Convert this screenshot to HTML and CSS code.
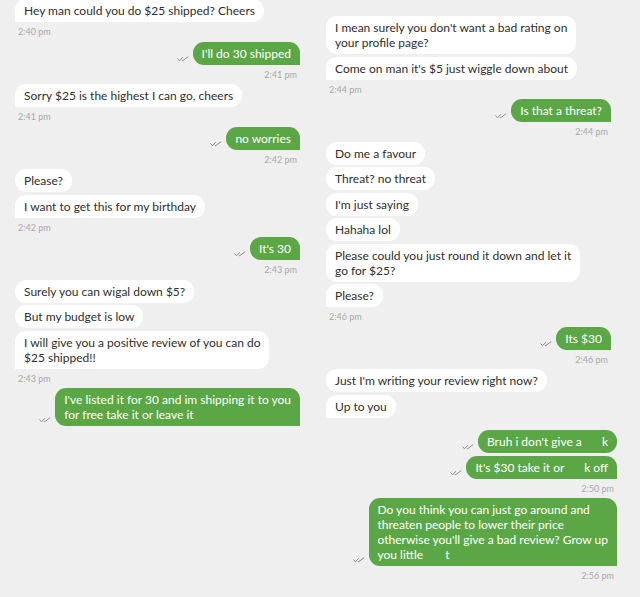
FILE: index.html
```html
<!DOCTYPE html>
<html lang="en">
<head>
<meta charset="utf-8">
<title>Chat</title>
<link rel="stylesheet" href="styles.css">
</head>
<body>
<main class="page">
  <section class="col col-left">
    <div class="group">
      <div class="row in"><p class="bubble tail">Hey man could you do $25 shipped? Cheers</p></div>
    </div>
    <div class="time">2:40 pm</div>

    <div class="group">
      <div class="row out"><svg class="tick" viewBox="0 0 12 6" width="12" height="6"><path d="M0.5 2.5 L2.5 4.8 L5.8 1.2 M4.8 4 L5.6 4.8 L11.2 0.6"/></svg><p class="bubble tail">I'll do 30 shipped</p></div>
    </div>
    <div class="time right">2:41 pm</div>

    <div class="group">
      <div class="row in"><p class="bubble tail">Sorry $25 is the highest I can go, cheers</p></div>
    </div>
    <div class="time">2:41 pm</div>

    <div class="group">
      <div class="row out"><svg class="tick" viewBox="0 0 12 6" width="12" height="6"><path d="M0.5 2.5 L2.5 4.8 L5.8 1.2 M4.8 4 L5.6 4.8 L11.2 0.6"/></svg><p class="bubble tail">no worries</p></div>
    </div>
    <div class="time right">2:42 pm</div>

    <div class="group">
      <div class="row in"><p class="bubble">Please?</p></div>
      <div class="row in"><p class="bubble tail">I want to get this for my birthday</p></div>
    </div>
    <div class="time">2:42 pm</div>

    <div class="group">
      <div class="row out"><svg class="tick" viewBox="0 0 12 6" width="12" height="6"><path d="M0.5 2.5 L2.5 4.8 L5.8 1.2 M4.8 4 L5.6 4.8 L11.2 0.6"/></svg><p class="bubble tail">It's 30</p></div>
    </div>
    <div class="time right">2:43 pm</div>

    <div class="group">
      <div class="row in"><p class="bubble">Surely you can wigal down $5?</p></div>
      <div class="row in"><p class="bubble">But my budget is low</p></div>
      <div class="row in"><p class="bubble tail">I will give you a positive review of you can do<br>$25 shipped!!</p></div>
    </div>
    <div class="time">2:43 pm</div>

    <div class="group">
      <div class="row out"><svg class="tick" viewBox="0 0 12 6" width="12" height="6"><path d="M0.5 2.5 L2.5 4.8 L5.8 1.2 M4.8 4 L5.6 4.8 L11.2 0.6"/></svg><p class="bubble tail">I've listed it for 30 and im shipping it to you<br>for free take it or leave it</p></div>
    </div>
  </section>

  <section class="col col-right">
    <div class="group">
      <div class="row in"><p class="bubble">I mean surely you don't want a bad rating on<br>your profile page?</p></div>
      <div class="row in"><p class="bubble tail">Come on man it's $5 just wiggle down about</p></div>
    </div>
    <div class="time">2:44 pm</div>

    <div class="group">
      <div class="row out"><svg class="tick" viewBox="0 0 12 6" width="12" height="6"><path d="M0.5 2.5 L2.5 4.8 L5.8 1.2 M4.8 4 L5.6 4.8 L11.2 0.6"/></svg><p class="bubble tail">Is that a threat?</p></div>
    </div>
    <div class="time right">2:44 pm</div>

    <div class="group">
      <div class="row in"><p class="bubble">Do me a favour</p></div>
      <div class="row in"><p class="bubble">Threat? no threat</p></div>
      <div class="row in"><p class="bubble">I'm just saying</p></div>
      <div class="row in"><p class="bubble">Hahaha lol</p></div>
      <div class="row in"><p class="bubble">Please could you just round it down and let it<br>go for $25?</p></div>
      <div class="row in"><p class="bubble tail">Please?</p></div>
    </div>
    <div class="time">2:46 pm</div>

    <div class="group">
      <div class="row out"><svg class="tick" viewBox="0 0 12 6" width="12" height="6"><path d="M0.5 2.5 L2.5 4.8 L5.8 1.2 M4.8 4 L5.6 4.8 L11.2 0.6"/></svg><p class="bubble tail">Its $30</p></div>
    </div>
    <div class="time right">2:46 pm</div>

    <div class="group">
      <div class="row in"><p class="bubble">Just I'm writing your review right now?</p></div>
      <div class="row in"><p class="bubble tail">Up to you</p></div>
    </div>

    <div class="later">
      <div class="group">
        <div class="row out"><svg class="tick" viewBox="0 0 12 6" width="12" height="6"><path d="M0.5 2.5 L2.5 4.8 L5.8 1.2 M4.8 4 L5.6 4.8 L11.2 0.6"/></svg><p class="bubble">Bruh i don't give a <span class="blank"></span>k</p></div>
        <div class="row out"><svg class="tick" viewBox="0 0 12 6" width="12" height="6"><path d="M0.5 2.5 L2.5 4.8 L5.8 1.2 M4.8 4 L5.6 4.8 L11.2 0.6"/></svg><p class="bubble tail">It's $30 take it or <span class="blank"></span>k off</p></div>
      </div>
      <div class="time right">2:50 pm</div>

      <div class="group">
        <div class="row out"><svg class="tick" viewBox="0 0 12 6" width="12" height="6"><path d="M0.5 2.5 L2.5 4.8 L5.8 1.2 M4.8 4 L5.6 4.8 L11.2 0.6"/></svg><p class="bubble tail">Do you think you can just go around and<br>threaten people to lower their price<br>otherwise you'll give a bad review? Grow up<br>you little <span class="blank wide"></span>t</p></div>
      </div>
      <div class="time right">2:56 pm</div>
    </div>
  </section>
</main>
</body>
</html>
```

FILE: styles.css
```css
html, body {
  margin: 0;
  padding: 0;
}

body {
  background: #efefef;
  font-family: Lato, "Open Sans", "Liberation Sans", sans-serif;
  color: #333;
}

.page {
  display: flex;
  height: 597px;
  overflow: hidden;
}

.col {
  width: 285px;
  display: flex;
  flex-direction: column;
}

.col-left {
  margin-left: 15px;
  margin-top: -1px;
}

.col-right {
  margin-left: 26px;
  padding-top: 16px;
}

.group {
  display: flex;
  flex-direction: column;
  gap: 2.5px;
}

.row {
  display: flex;
  align-items: flex-end;
}

.row.out {
  justify-content: flex-end;
  gap: 4px;
}

.bubble {
  margin: 0;
  padding: 4px 9px;
  font-size: 12px;
  line-height: 15px;
  border-radius: 11px;
  white-space: nowrap;
}

.in .bubble {
  background: #ffffff;
  color: #2e2e2e;
}

.in .bubble.tail {
  border-bottom-left-radius: 0;
}

.out .bubble {
  background: #5ba746;
  color: #ffffff;
}

.out .bubble.tail {
  border-bottom-right-radius: 0;
}

.tick {
  flex: none;
  margin-bottom: 3px;
  fill: none;
  stroke: #8a8a8a;
  stroke-width: 1;
}

.time {
  height: 19.5px;
  line-height: 19.5px;
  font-size: 9px;
  color: #a8a8a8;
  padding: 0 3px;
}

.time.right {
  text-align: right;
}

.blank {
  display: inline-block;
  width: 17px;
}

.blank.wide {
  width: 19px;
}

.later {
  margin-top: 12.5px;
  margin-right: -6px;
}
```
